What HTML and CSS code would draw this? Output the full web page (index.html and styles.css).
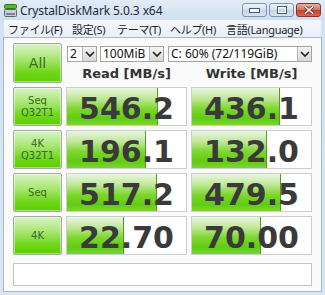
FILE: index.html
```html
<!DOCTYPE html>
<html>
<head>
  <title>CrystalDiskMark 5.0.3 x64</title>
  <link rel="stylesheet" href="styles.css">
</head>
<body>
  <div class="window">

    <!-- Title bar -->
    <div class="titlebar">
      <svg class="app-icon" width="13" height="13" viewBox="0 0 13 13">
        <rect x="0.5" y="0.5" width="12" height="4" rx="1" fill="#4cc02a" stroke="#2e7d1a"/>
        <rect x="0.5" y="5.5" width="12" height="7" rx="1" fill="#c9ced6" stroke="#5d6570"/>
        <rect x="2" y="9" width="9" height="2" fill="#7c858f"/>
      </svg>
      <span class="title">CrystalDiskMark 5.0.3 x64</span>
      <div class="caption-buttons">
        <span class="cap-btn">
          <svg width="11" height="5" viewBox="0 0 11 5"><rect x="0.5" y="0.5" width="10" height="4" fill="#fff" stroke="#4b5a70"/></svg>
        </span>
        <span class="cap-btn">
          <svg width="10" height="8" viewBox="0 0 10 8"><rect x="0.5" y="0.5" width="9" height="7" fill="none" stroke="#4b5a70"/><rect x="1.5" y="1.5" width="7" height="5" fill="none" stroke="#fff"/></svg>
        </span>
        <span class="cap-btn close">
          <svg width="10" height="8" viewBox="0 0 10 8"><path d="M1 0.5 L9 7.5 M9 0.5 L1 7.5" stroke="#6b2418" stroke-width="3"/><path d="M1 0.5 L9 7.5 M9 0.5 L1 7.5" stroke="#fff" stroke-width="1.6"/></svg>
        </span>
      </div>
    </div>

    <!-- Menu bar -->
    <div class="menubar">
      <span class="menu-item file">ファイル(F)</span>
      <span class="menu-item settings">設定(S)</span>
      <span class="menu-item theme">テーマ(T)</span>
      <span class="menu-item help">ヘルプ(H)</span>
      <span class="menu-item">言語(Language)</span>
    </div>

    <!-- Benchmark area -->
    <div class="client">
      <div class="bench-grid" id="benchGrid">
        <div class="test-btn all">All</div>
        <div class="controls">
          <div class="selects">
            <div class="combo combo-count"><span>2</span><i class="drop"></i></div>
            <div class="combo combo-size"><span>100MiB</span><i class="drop"></i></div>
            <div class="combo combo-drive"><span>C: 60% (72/119GiB)</span><i class="drop"></i></div>
          </div>
          <div class="headers">
            <div class="col-title">Read [MB/s]</div>
            <div class="col-title">Write [MB/s]</div>
          </div>
        </div>
      </div>
      <div class="status"></div>
    </div>
  </div>

  <script>
    const benchGrid = document.getElementById('benchGrid');

    // Results shown in the window (bar = width of the green fill in px)
    const results = [
      { label: ['Seq', 'Q32T1'], read: '546.2', readBar: 90, write: '436.1', writeBar: 87 },
      { label: ['4K', 'Q32T1'], read: '196.1', readBar: 78, write: '132.0', writeBar: 74 },
      { label: ['Seq'], read: '517.2', readBar: 89, write: '479.5', writeBar: 88 },
      { label: ['4K'], read: '22.70', readBar: 56, write: '70.00', writeBar: 68 }
    ];

    function resultBox(value, bar) {
      const box = document.createElement('div');
      box.classList.add('result');

      const fill = document.createElement('div');
      fill.classList.add('bar');
      fill.style.width = bar + 'px';
      box.appendChild(fill);

      const text = document.createElement('span');
      text.classList.add('value');
      text.textContent = value;
      box.appendChild(text);

      return box;
    }

    results.forEach(function(row) {
      const btn = document.createElement('div');
      btn.classList.add('test-btn');
      btn.innerHTML = row.label.join('<br>');
      benchGrid.appendChild(btn);

      benchGrid.appendChild(resultBox(row.read, row.readBar));
      benchGrid.appendChild(resultBox(row.write, row.writeBar));
    });
  </script>
</body>
</html>
```

FILE: styles.css
```css
body {
  margin: 0;
  font-family: 'Noto Sans', sans-serif;
  background-color: #fff;
}
.window {
  width: 325px;
  height: 295px;
  background: linear-gradient(#d3e1f1, #dbe6f3);
  display: flex;
  flex-direction: column;
  overflow: hidden;
}

/* title bar */
.titlebar {
  height: 20px;
  display: flex;
  align-items: center;
  padding-left: 4px;
  background: linear-gradient(#e3ecf7, #d0dff0);
}
.app-icon {
  margin-right: 3px;
}
.title {
  font-size: 12px;
  color: #1e2a38;
  letter-spacing: -0.1px;
}
.caption-buttons {
  margin-left: auto;
  margin-right: 4px;
  display: flex;
  gap: 2px;
  align-self: flex-start;
  margin-top: 3px;
}
.cap-btn {
  width: 25px;
  height: 14px;
  border: 1px solid #8094b0;
  border-radius: 3px;
  background: linear-gradient(#eef3fa, #d3deec 50%, #c3d2e6 51%, #d8e3f1);
  display: flex;
  align-items: center;
  justify-content: center;
  box-sizing: border-box;
}
.cap-btn.close {
  border-color: #8a3529;
  background: linear-gradient(#ebb0a2, #d5705e 50%, #c2412e 51%, #d6684f);
}

/* menu bar */
.menubar {
  height: 18px;
  margin: 0 4px;
  padding-left: 4px;
  display: flex;
  align-items: center;
  background: linear-gradient(#f5f8fc, #e8eef6);
  font-family: 'Noto Sans', 'Noto Sans CJK JP', sans-serif;
  font-size: 11px;
  color: #1e1e1e;
}
.menu-item {
  white-space: nowrap;
  letter-spacing: -0.3px;
}
.menu-item.file {
  width: 64px;
}
.menu-item.settings {
  width: 45px;
}
.menu-item.theme {
  width: 53px;
}
.menu-item.help {
  width: 56px;
}

/* client */
.client {
  flex: 1;
  margin: 0 4px 4px;
  background-color: #fafafa;
  box-shadow: 0 0 0 1px #a7b6ca;
  padding: 5px 9px 0;
}
.bench-grid {
  display: grid;
  grid-template-columns: 49px 121px 121px;
  grid-template-rows: 40px 39px 39px 39px 39px;
  gap: 4px;
}
.test-btn {
  border: 1px solid #a3aa9f;
  border-radius: 2px;
  background: linear-gradient(#d7f4c6, #a8e672 40%, #72d81e 72%, #5ccf00);
  box-shadow: inset 0 0 0 1px rgba(255, 255, 255, 0.45);
  color: #3a6a20;
  font-family: 'DejaVu Sans', sans-serif;
  font-size: 10px;
  line-height: 12px;
  display: flex;
  align-items: center;
  justify-content: center;
  text-align: center;
}
.test-btn.all {
  font-size: 14px;
}

/* controls above the results */
.controls {
  grid-column: 2 / 4;
  display: flex;
  flex-direction: column;
}
.selects {
  display: flex;
  margin-top: 3px;
  margin-left: 1px;
  height: 16px;
}
.combo {
  box-sizing: border-box;
  height: 16px;
  border: 1px solid #a5a5a5;
  background-color: #fff;
  display: flex;
  align-items: center;
  font-size: 12px;
  color: #111;
  padding-left: 2px;
}
.combo span {
  flex: 1;
  line-height: 14px;
}
.combo-count {
  width: 30px;
  margin-right: 3px;
}
.combo-size {
  width: 64px;
  margin-right: 4px;
}
.combo-drive {
  width: 144px;
}
.drop {
  width: 14px;
  height: 14px;
  box-sizing: border-box;
  border-left: 1px solid #b5b5b5;
  background-image: url("data:image/svg+xml,%3Csvg xmlns='http://www.w3.org/2000/svg' width='14' height='14'%3E%3Cpath d='M3 5 L7 9 L11 5' fill='none' stroke='%23222' stroke-width='1.6'/%3E%3C/svg%3E"), linear-gradient(#f4f4f4, #d8d8d8);
}
.headers {
  display: flex;
  gap: 4px;
  margin-top: 3px;
}
.col-title {
  width: 121px;
  text-align: center;
  font-family: 'DejaVu Sans', sans-serif;
  font-weight: bold;
  font-size: 13px;
  line-height: 18px;
  color: #333;
}

/* result boxes */
.result {
  position: relative;
  border: 1px solid #cdcdcd;
  background-color: #fff;
  display: flex;
  align-items: center;
  justify-content: center;
}
.bar {
  position: absolute;
  left: 0;
  top: 0;
  bottom: 0;
  border-right: 1px solid #4f9f22;
  background: linear-gradient(#eaf6e3, #bde794 30%, #7ed62e 56%, #61cc0e 82%, #78d634);
}
.value {
  position: relative;
  font-family: 'DejaVu Sans', sans-serif;
  font-weight: bold;
  font-size: 30px;
  line-height: 37px;
  color: #3a3a3a;
  margin-top: 3px;
}

.status {
  margin-top: 8px;
  height: 23px;
  box-sizing: border-box;
  border: 1px solid #c4c4c4;
  background-color: #fff;
}
```
